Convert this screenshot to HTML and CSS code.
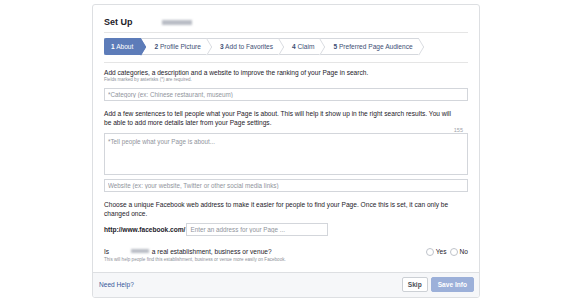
FILE: index.html
```html
<!DOCTYPE html>
<html lang="en">
<head>
  <meta charset="UTF-8" />
  <meta name="viewport" content="width=device-width, initial-scale=1.0" />
  <title>Set Up Page</title>
  <link rel="stylesheet" href="styles.css">
</head>
<body>
  <div class="dialog">
    <div class="dialog-body">
      <div class="header">
        <span class="title">Set Up</span>
        <span class="blur name"></span>
      </div>

      <div class="steps-row">
        <ol class="steps">
          <li class="active"><b>1</b> About</li>
          <li><b>2</b> Profile Picture</li>
          <li><b>3</b> Add to Favorites</li>
          <li><b>4</b> Claim</li>
          <li><b>5</b> Preferred Page Audience</li>
        </ol>
      </div>

      <p class="lead first">Add categories, a description and a website to improve the ranking of your Page in search.</p>
      <p class="hint">Fields marked by asterisks (*) are required.</p>
      <input type="text" class="field" placeholder="*Category (ex: Chinese restaurant, museum)" />

      <p class="lead about">Add a few sentences to tell people what your Page is about. This will help it show up in the right search results. You will<br>be able to add more details later from your Page settings.</p>
      <div class="counter">155</div>
      <textarea class="field area" placeholder="*Tell people what your Page is about..."></textarea>
      <input type="text" class="field website" placeholder="Website (ex: your website, Twitter or other social media links)" />

      <p class="lead address">Choose a unique Facebook web address to make it easier for people to find your Page. Once this is set, it can only be changed once.</p>
      <div class="url-row">
        <b>http://www.facebook.com/</b>
        <input type="text" class="field url" placeholder="Enter an address for your Page ..." />
      </div>

      <div class="venue-row">
        <div>
          <p class="lead">Is <span class="blur inline"></span> a real establishment, business or venue?</p>
          <p class="hint venue-hint">This will help people find this establishment, business or venue more easily on Facebook.</p>
        </div>
        <div class="radios">
          <label><span class="radio"></span>Yes</label>
          <label><span class="radio"></span>No</label>
        </div>
      </div>
    </div>

    <div class="footer">
      <a href="#" class="help">Need Help?</a>
      <div class="actions">
        <button class="btn">Skip</button>
        <button class="btn primary">Save Info</button>
      </div>
    </div>
  </div>
</body>
</html>
```

FILE: styles.css
```css
body {
  margin: 0;
  padding: 4px 0 0 92px;
  background: #fff;
  font-family: "Liberation Sans", Arial, sans-serif;
  color: #1d2129;
}
.dialog {
  width: 386px;
  border: 1px solid #dddfe2;
  border-radius: 3px;
  overflow: hidden;
}
.dialog-body {
  padding: 0 11px 9px;
}
.header {
  display: flex;
  align-items: center;
  gap: 29px;
  padding: 12px 0 4px;
  border-bottom: 1px solid #e5e5e5;
}
.title {
  font-size: 9px;
  font-weight: bold;
  line-height: 11px;
}
.blur {
  display: inline-block;
  background: #b9bdc5;
  filter: blur(1px);
}
.blur.name {
  width: 30px;
  height: 5px;
}
.blur.inline {
  width: 18px;
  height: 4px;
  margin: 0 1px 0 20px;
  vertical-align: 1px;
}
.steps-row {
  padding: 5px 0 7px;
  border-bottom: 1px solid #e5e5e5;
}
.steps {
  display: flex;
  list-style: none;
  margin: 0;
  padding: 0;
}
.steps li {
  position: relative;
  height: 15px;
  line-height: 15px;
  padding: 0 6px 0 13px;
  border: solid #d5d8dd;
  border-width: 1px 0;
  font-size: 6.6px;
  color: #3d4f75;
  white-space: nowrap;
}
.steps li::after {
  content: "";
  position: absolute;
  top: 1.5px;
  right: -6px;
  width: 12px;
  height: 12px;
  box-sizing: border-box;
  border: solid #d5d8dd;
  border-width: 1px 1px 0 0;
  background: #fff;
  transform: scaleX(0.6) rotate(45deg);
  z-index: 1;
}
.steps li:first-child {
  padding-left: 6px;
  padding-right: 8px;
  border-left-width: 1px;
  border-radius: 2px 0 0 2px;
}
.steps li.active {
  background: #5d7cb9;
  border-color: #5d7cb9;
  color: #fff;
}
.steps li.active::after {
  background: #5d7cb9;
  border-color: #5d7cb9;
}
.lead {
  margin: 0;
  font-size: 6.6px;
  line-height: 9px;
}
.lead.first {
  margin-top: 5px;
}
.lead.about,
.lead.address {
  margin-top: 8px;
}
.hint {
  margin: 0;
  font-size: 4.6px;
  line-height: 5px;
  color: #8d9199;
}
.field {
  display: block;
  box-sizing: border-box;
  width: 100%;
  height: 13px;
  margin: 6px 0 0;
  padding: 0 3px;
  border: 1px solid #d3d6db;
  border-radius: 0;
  font-family: "Liberation Sans", Arial, sans-serif;
  font-size: 6.3px;
  color: #1d2129;
  outline: none;
}
.field::placeholder {
  color: #90949c;
}
.counter {
  font-size: 5.5px;
  line-height: 6px;
  color: #a0a4aa;
  text-align: right;
  padding-right: 5px;
}
.field.area {
  height: 42px;
  margin: 0;
  padding: 4px 3px;
  line-height: 8px;
  resize: none;
}
.field.website {
  margin-top: 4px;
}
.url-row {
  display: flex;
  align-items: center;
  gap: 1px;
  margin-top: 5px;
  font-size: 6.6px;
}
.field.url {
  width: 142px;
  margin: 0;
}
.venue-row {
  display: flex;
  justify-content: space-between;
  align-items: flex-start;
  margin-top: 11px;
}
.venue-hint {
  margin-top: 1px;
  line-height: 6px;
}
.radios {
  display: flex;
  gap: 3px;
  height: 9px;
  align-items: center;
}
.radios label {
  display: flex;
  align-items: center;
  gap: 2px;
  font-size: 6.6px;
}
.radio {
  width: 6px;
  height: 6px;
  border: 1px solid #bec2c9;
  border-radius: 50%;
  background: #fff;
}
.footer {
  display: flex;
  justify-content: space-between;
  align-items: center;
  padding: 4px 5px 5px 6px;
  border-top: 1px solid #dddfe2;
  background: #f6f7f9;
}
.help {
  font-size: 6.6px;
  color: #365899;
  text-decoration: none;
}
.actions {
  display: flex;
  gap: 3px;
}
.btn {
  height: 15px;
  padding: 0 5px;
  border: 1px solid #ccd0d5;
  border-radius: 2px;
  background: #fff;
  font-family: "Liberation Sans", Arial, sans-serif;
  font-size: 6.6px;
  font-weight: bold;
  color: #4b4f56;
}
.btn.primary {
  padding: 0 6px;
  background: #9cb0d9;
  border-color: #9cb0d9;
  color: #fff;
}
```
